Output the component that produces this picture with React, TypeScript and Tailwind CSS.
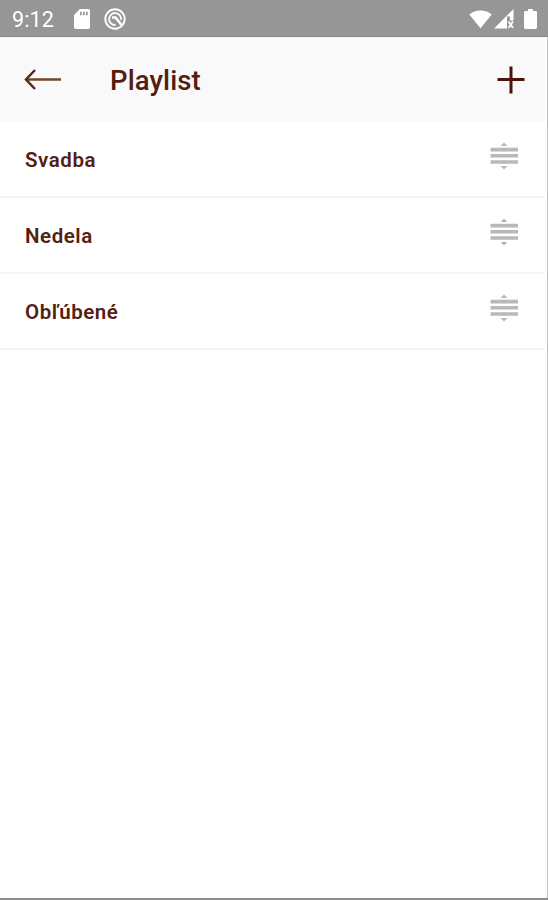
type Playlist = { id: number; name: string };

const playlists: Playlist[] = [
  { id: 1, name: "Svadba" },
  { id: 2, name: "Nedela" },
  { id: 3, name: "Obľúbené" },
];

function StatusBar() {
  return (
    <div className="flex h-[37px] shrink-0 items-center border-b border-[#858585] bg-[#969696] pl-3 pr-[11px] text-white">
      <span className="mt-[3px] w-[43px] whitespace-nowrap text-[21.5px] leading-none tracking-[0.1px]">9:12</span>
      <svg className="ml-[19px] mt-px" width="16" height="20" viewBox="0 0 16 20" fill="currentColor">
        <path
          fillRule="evenodd"
          d="M6 0h8.200a1.800 1.800 0 0 1 1.800 1.800v16.400a1.800 1.800 0 0 1-1.800 1.800H1.800A1.800 1.800 0 0 1 0 18.200V6zM6 2.800v3.400h1.700V2.800zM9 2.800v3.400h1.700V2.800zM12 2.800v3.400h1.700V2.800z"
        />
      </svg>
      <svg className="ml-[14px] mt-px" width="22" height="22" viewBox="0 0 22 22" fill="none" stroke="currentColor">
        <circle cx="11" cy="11" r="9.700" strokeWidth="1.900" />
        <path d="M11.500 17A6 6 0 1 1 17 12" strokeWidth="1.800" />
        <path d="M8 9.500h3.500l6 7.500" strokeWidth="2.600" />
      </svg>
      <div className="ml-auto mt-[2px] flex items-center">
        <svg width="23" height="19" viewBox="0 0 24 19" fill="currentColor">
          <path d="M12 18.700L.3 4.200C3.500 1.500 7.500 0 12 0s8.500 1.500 11.700 4.200z" />
        </svg>
        <svg className="ml-[2px]" width="20" height="20" viewBox="0 0 20 20">
          <path d="M19.500 0v19.500H0z" fill="currentColor" />
          <path d="M13 7.500h3v4h4v8.500h-7z" fill="#969696" />
          <path d="M14.500 12.500l4.500 6.500M19 12.500l-4.500 6.500" stroke="currentColor" strokeWidth="1.800" />
        </svg>
        <svg className="ml-[10px]" width="13" height="20" viewBox="0 0 13 21" preserveAspectRatio="none" fill="currentColor">
          <path d="M4 0h5v2h2.500A1.500 1.500 0 0 1 13 3.500v16a1.500 1.500 0 0 1-1.500 1.500h-10A1.500 1.500 0 0 1 0 19.500v-16A1.500 1.500 0 0 1 1.500 2H4z" />
        </svg>
      </div>
    </div>
  );
}

function Header() {
  return (
    <header className="mr-[2px] flex h-[85px] shrink-0 items-center bg-[#f9f9f9] pl-6 pr-[20px]">
      <button type="button" aria-label="Back">
        <svg width="38" height="22" viewBox="0 0 38 22" fill="none">
          <path d="M2 10.500h35" stroke="#704522" strokeWidth="2.500" />
          <path d="M11 1L2 10.500 11 20" stroke="#5a2815" strokeWidth="2.500" />
        </svg>
      </button>
      <h1 className="ml-12 mt-[2px] text-[27.5px] font-medium leading-8 tracking-[0.1px] text-[#541c10]">Playlist</h1>
      <button type="button" aria-label="Add" className="ml-auto">
        <svg width="28" height="28" viewBox="0 0 28 28" fill="none" stroke="#521009" strokeWidth="3">
          <path d="M14 .5v27M.5 13.500h27" />
        </svg>
      </button>
    </header>
  );
}

function DragHandle() {
  return (
    <svg width="28" height="28" viewBox="0 0 28 28" fill="#b8b8b8">
      <path d="M14 .5l3.500 3.500h-7zM.5 5.800h27.500v3.600H.5zM.5 12h27.500v3.600H.5zM.5 18.200h27.500v3.600H.5zM10.500 24h7L14 27.500z" />
    </svg>
  );
}

export default function App() {
  return (
    <div className="flex h-[900px] w-[548px] flex-col overflow-hidden border-b-2 border-[#8b8b8b] bg-white font-['Roboto',sans-serif]">
      <StatusBar />
      <main className="flex flex-1 flex-col border-r border-[#c4c4c4]">
        <Header />
        <ul>
          {playlists.map((playlist) => (
            <li
              key={playlist.id}
              className="mr-[2px] flex h-[76px] items-center justify-between border-b-2 border-[#f5f5f5] pl-[25px] pr-[27px]"
            >
              <span className="mt-[2px] text-[20.5px] font-semibold leading-6 tracking-[0.55px] text-[#54200f]">
                {playlist.name}
              </span>
              <span className="-mt-[6px]">
                <DragHandle />
              </span>
            </li>
          ))}
        </ul>
      </main>
    </div>
  );
}
